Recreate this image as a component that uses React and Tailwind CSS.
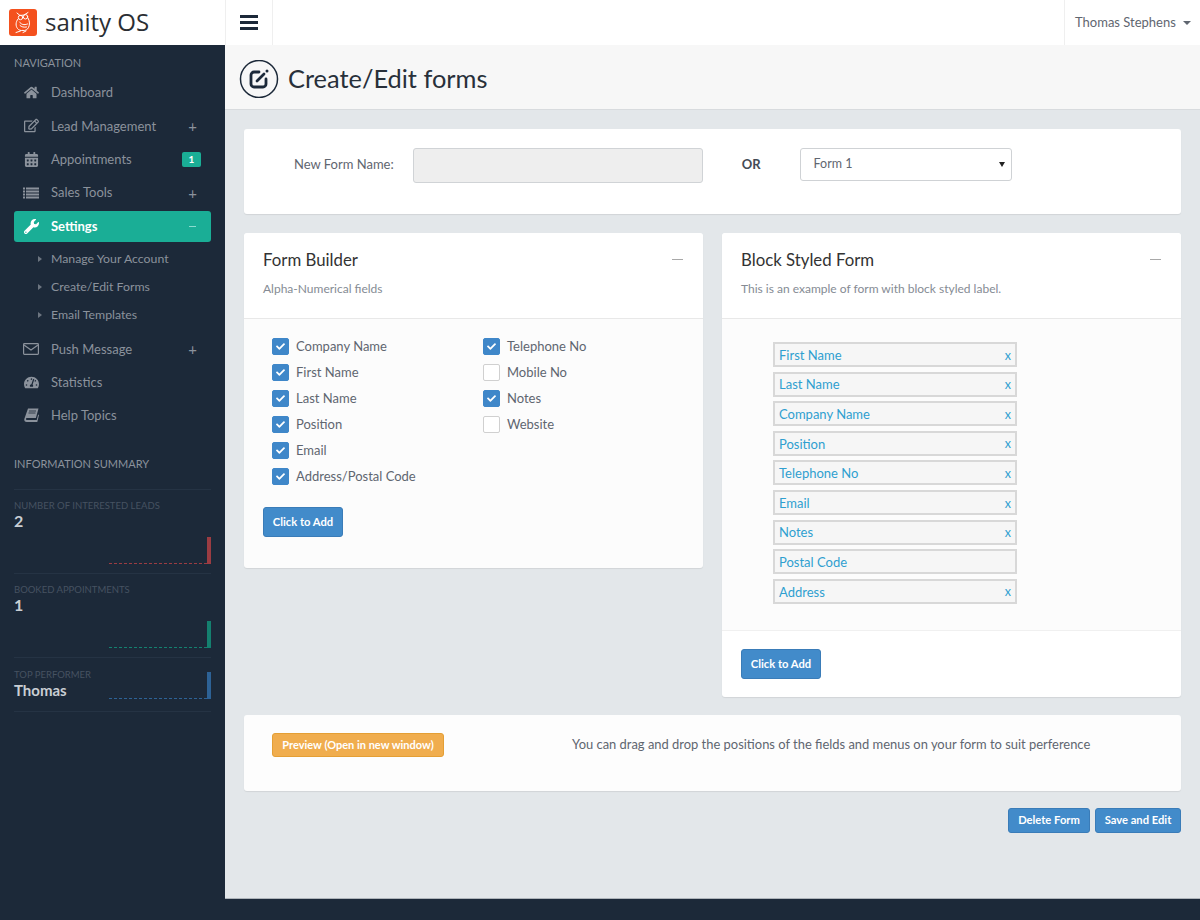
import { FaHome, FaRegEdit, FaCalendarAlt, FaWrench, FaTachometerAlt, FaCheck } from "react-icons/fa";

function EnvelopeIcon() {
  return (
    <svg width="16" height="12" viewBox="0 0 16 12" fill="none" stroke="currentColor" strokeWidth="1.200">
      <rect x="0.600" y="0.600" width="14.800" height="10.800" rx="0.800" />
      <path d="M1 2l7 5 7-5" />
    </svg>
  );
}

function BookIcon() {
  return (
    <svg width="15" height="14" viewBox="0 0 15 14" fill="currentColor">
      <path d="M4 0.500h10.500l-2.600 9.500H3.300c-.9 0-1.300.4-1.300 1s.4 1 1.300 1h9.400l1.500-5.500.8.600L13.300 14H2.800C1 14 0 12.800 .3 11z" />
      <path d="M5 3h7M4.500 5h7" stroke="#1c2939" strokeWidth="0.800" />
    </svg>
  );
}

function ListIcon() {
  return (
    <svg width="16" height="12" viewBox="0 0 16 12" fill="currentColor">
      <rect x="0" y="0.500" width="2" height="2" />
      <rect x="3" y="0.500" width="13" height="2" />
      <rect x="0" y="3.500" width="2" height="2" />
      <rect x="3" y="3.500" width="13" height="2" />
      <rect x="0" y="6.500" width="2" height="2" />
      <rect x="3" y="6.500" width="13" height="2" />
      <rect x="0" y="9.500" width="2" height="2" />
      <rect x="3" y="9.500" width="13" height="2" />
    </svg>
  );
}

const navTop = [
  { label: "Dashboard", icon: <FaHome size={15} /> },
  { label: "Lead Management", icon: <FaRegEdit size={15} />, plus: true },
  { label: "Appointments", icon: <FaCalendarAlt size={15} />, badge: "1" },
  { label: "Sales Tools", icon: <ListIcon />, plus: true },
];
const navBottom = [
  { label: "Push Message", icon: <EnvelopeIcon />, plus: true },
  { label: "Statistics", icon: <FaTachometerAlt size={15} /> },
  { label: "Help Topics", icon: <BookIcon /> },
];
const subItems = ["Manage Your Account", "Create/Edit Forms", "Email Templates"];
const col1 = ["Company Name", "First Name", "Last Name", "Position", "Email", "Address/Postal Code"];
const col2 = [
  { label: "Telephone No", on: true },
  { label: "Mobile No", on: false },
  { label: "Notes", on: true },
  { label: "Website", on: false },
];
const blocks = [
  { label: "First Name", x: true },
  { label: "Last Name", x: true },
  { label: "Company Name", x: true },
  { label: "Position", x: true },
  { label: "Telephone No", x: true },
  { label: "Email", x: true },
  { label: "Notes", x: true },
  { label: "Postal Code", x: false },
  { label: "Address", x: true },
];

function Owl() {
  return (
    <svg width="28" height="27" viewBox="0 0 28 27" className="shrink-0">
      <rect width="28" height="27" rx="3" fill="#f4511e" />
      <g fill="none" stroke="#fff" strokeWidth="1" strokeLinecap="round" strokeLinejoin="round">
        <path d="M8 4l3 2.500 4-.5 4-2.500" />
        <circle cx="11.500" cy="8.500" r="2.200" />
        <circle cx="16.500" cy="7.800" r="2.200" />
        <path d="M9 10c-2.500 3-2.500 7-.5 9.500 1.200 1.500 3 2.300 5 2" />
        <path d="M19 9c2 3 1.800 7 .5 9.500-1 2-3 3.500-6 3" />
        <path d="M10.500 13c1.500 2.500 4.500 3.500 8 2M11 16.500c1.500 1.500 4 2 6.500 1.500" />
        <path d="M7 23.500l4.500-1.500M14 23.500l3-1.500" />
      </g>
    </svg>
  );
}

function NavItem({ item }) {
  return (
    <div className="flex h-[33.300px] items-center pl-[9px] pr-[14px] text-[#8b929c]">
      <span className="flex w-[16px] items-center justify-center">{item.icon}</span>
      <span className="ml-[12px] pt-[1px] text-[13px]">{item.label}</span>
      {item.plus && <span className="ml-auto mt-[2px] text-[15px] leading-none">+</span>}
      {item.badge && (
        <span className="ml-auto -mr-[4px] flex h-[15px] w-[19px] items-center justify-center rounded-[2px] bg-[#1aae96] text-[10px] font-bold text-white">
          {item.badge}
        </span>
      )}
    </div>
  );
}

function Stat({ label, value, color, valueClass, small }) {
  return (
    <div className={`relative border-b border-[#253344] ${small ? "h-[54px] pt-[11px]" : "h-[84px] pt-[10px]"}`}>
      <div className="text-[9.500px] leading-[12px] text-[#465261]">{label}</div>
      <div className={`-mt-[1px] leading-[20px] text-[#c9ced4] ${valueClass}`}>{value}</div>
      <div className={`absolute right-0 flex h-[27px] items-end ${small ? "bottom-[12px]" : "bottom-[9px]"}`}>
        <div className="w-[98px] border-b border-dashed" style={{ borderColor: color }} />
        <div className="h-[27px] w-[4px]" style={{ backgroundColor: color }} />
      </div>
    </div>
  );
}

function Check({ on }) {
  return (
    <span className={`flex h-[17px] w-[17px] items-center justify-center rounded-[2px] border ${on ? "border-[#3f87c9] bg-[#3f87c9]" : "border-[#d0d0d0] bg-white"}`}>
      {on && <FaCheck size={9} className="text-white" />}
    </span>
  );
}

function CheckRow({ label, on }) {
  return (
    <div className="flex h-[26px] items-center gap-[7px] text-[13px] text-[#5f6670]">
      <Check on={on} />
      <span className="pt-[1px]">{label}</span>
    </div>
  );
}

function BlueButton({ children, className = "" }) {
  return (
    <button className={`rounded-[3px] border border-[#3a7cb8] bg-[#428bca] text-[11.200px] font-bold text-white ${className}`}>
      {children}
    </button>
  );
}

function CardHead({ title, sub }) {
  return (
    <div className="relative h-[86px] rounded-t-[3px] border-b border-[#e8e8e8] bg-white px-[19px] pt-[17px]">
      <h2 className="text-[16.800px] leading-[20px] text-[#333]">{title}</h2>
      <p className="mt-[12px] text-[12px] leading-[14px] text-[#858b94]">{sub}</p>
      <div className="absolute right-[20px] top-[26px] h-[1px] w-[11px] bg-[#a8a8a8]" />
    </div>
  );
}

export default function App() {
  return (
    <div className="flex h-[920px] w-[1200px] flex-col overflow-hidden bg-[#1c2939] font-['Lato',sans-serif]">
      <header className="flex h-[45px] shrink-0 bg-white">
        <div className="flex w-[225px] items-center gap-[8px] pl-[9px] pb-[1px]">
          <Owl />
          <span className="pb-[1px] font-['Open_Sans',sans-serif] text-[24px] leading-none text-[#2a2e33]">sanity OS</span>
        </div>
        <div className="flex w-[48px] items-center justify-center border-x border-[#efefef]">
          <div className="flex w-[18px] flex-col gap-[3px]">
            <div className="h-[3px] bg-[#1c2939]" />
            <div className="h-[3px] bg-[#1c2939]" />
            <div className="h-[3px] bg-[#1c2939]" />
          </div>
        </div>
        <div className="ml-auto flex w-[136px] items-center border-l border-[#efefef] pl-[10px] text-[13px] text-[#5f6670]">
          Thomas Stephens
          <span className="ml-[7px] mt-[1px] h-0 w-0 border-x-[4px] border-t-[4px] border-x-transparent border-t-[#5f6670]" />
        </div>
      </header>

      <div className="flex min-h-0 flex-1">
        <aside className="w-[225px] shrink-0 bg-[#1c2939] px-[14px]">
          <div className="pt-[12px] text-[11px] leading-[12px] text-[#8b929c]">NAVIGATION</div>
          <div className="mt-[7px]">
            {navTop.map((i) => (
              <NavItem key={i.label} item={i} />
            ))}
          </div>
          <div className="mt-[2px] flex h-[31px] items-center rounded-[3px] bg-[#1aae96] pl-[9px] pr-[14px] text-white">
            <span className="flex w-[16px] justify-center"><FaWrench size={15} /></span>
            <span className="ml-[12px] text-[13px] font-bold">Settings</span>
            <span className="ml-auto mr-[1px] h-[1px] w-[7px] bg-[#8adccf]" />
          </div>
          <div className="mt-[3px] pb-[3px]">
            {subItems.map((s) => (
              <div key={s} className="flex h-[28px] items-center pl-[24px] text-[12.300px] text-[#8b929c]">
                <span className="mr-[9px] h-0 w-0 border-y-[3.500px] border-l-[4px] border-y-transparent border-l-[#6c7580]" />
                <span className="pt-[1px]">{s}</span>
              </div>
            ))}
          </div>
          {navBottom.map((i) => (
            <NavItem key={i.label} item={i} />
          ))}
          <div className="mt-[25px] text-[11px] leading-[14px] text-[#8b929c]">INFORMATION SUMMARY</div>
          <div className="mt-[18px] border-t border-[#253344]">
            <Stat label="NUMBER OF INTERESTED LEADS" value="2" color="#9b3c42" valueClass="text-[16px] font-bold" />
            <Stat label="BOOKED APPOINTMENTS" value="1" color="#14806f" valueClass="text-[16px] font-bold" />
            <Stat label="TOP PERFORMER" value="Thomas" color="#2d6296" valueClass="text-[15px] font-bold" small />
          </div>
        </aside>

        <main className="flex min-w-0 flex-1 flex-col">
          <div className="flex h-[65px] shrink-0 items-center gap-[9px] border-b border-[#d8dbde] bg-[#f7f7f7] pl-[14px] pt-[4px]">
            <svg width="40" height="38" viewBox="0 0 40 38" fill="none" stroke="#1c2939">
              <circle cx="20" cy="19" r="18.500" strokeWidth="1.500" />
              <path d="M20 12h-5a3 3 0 0 0-3 3v9a3 3 0 0 0 3 3h9a3 3 0 0 0 3-3v-5" strokeWidth="2.800" strokeLinecap="round" />
              <path d="M18 21l7-7" strokeWidth="2.800" strokeLinecap="round" />
              <circle cx="28" cy="11" r="1.500" fill="#1c2939" stroke="none" />
            </svg>
            <h1 className="text-[25.400px] leading-none text-[#28303a]">Create/Edit forms</h1>
          </div>

          <div className="flex-1 bg-[#e3e7ea] pl-[19px] pr-[19px] pt-[19px]">
            <section className="flex h-[85px] items-start rounded-[3px] bg-white pt-[19px] shadow-[0_1px_1px_rgba(0,0,0,0.08)]">
              <label className="ml-[50px] mt-[7px] text-[13px] leading-[18px] text-[#5f6670]">New Form Name:</label>
              <input disabled className="ml-[19px] h-[35px] w-[290px] rounded-[3px] border border-[#d0d3d6] bg-[#eeeeee]" />
              <span className="ml-[39px] mt-[7px] text-[13px] font-bold leading-[18px] text-[#444b55]">OR</span>
              <div className="relative ml-[39px] flex h-[33px] w-[212px] items-center rounded-[3px] border border-[#cfd2d5] bg-white pl-[13px] text-[12.500px] text-[#5f6670]">
                Form 1
                <span className="absolute right-[6px] top-[13px] h-0 w-0 border-x-[3.500px] border-t-[5px] border-x-transparent border-t-[#222]" />
              </div>
            </section>

            <div className="mt-[19px] flex items-start gap-[19px]">
              <section className="w-[459px] overflow-hidden rounded-[3px] bg-[#fcfcfc] shadow-[0_1px_1px_rgba(0,0,0,0.08)]">
                <CardHead title="Form Builder" sub="Alpha-Numerical fields" />
                <div className="flex px-[28px] pt-[14px]">
                  <div className="w-[211px]">
                    {col1.map((l) => (
                      <CheckRow key={l} label={l} on />
                    ))}
                  </div>
                  <div>
                    {col2.map((c) => (
                      <CheckRow key={c.label} label={c.label} on={c.on} />
                    ))}
                  </div>
                </div>
                <div className="px-[19px] pb-[31px] pt-[18px]">
                  <BlueButton className="h-[30px] w-[80px]">Click to Add</BlueButton>
                </div>
              </section>

              <section className="flex-1 overflow-hidden rounded-[3px] bg-white shadow-[0_1px_1px_rgba(0,0,0,0.08)]">
                <CardHead title="Block Styled Form" sub="This is an example of form with block styled label." />
                <div className="flex h-[312px] flex-col gap-[4.600px] border-b border-[#f0f0f0] bg-[#fcfcfc] pl-[51px] pt-[23px]">
                  {blocks.map((b) => (
                    <div key={b.label} className="flex h-[25px] w-[244px] shrink-0 items-center justify-between border-2 border-[#d8d8d8] bg-[#f6f6f6] pl-[4px] pr-[4px] pt-[2px] text-[13px] text-[#2f9fd0]">
                      <span>{b.label}</span>
                      {b.x && <span className="mt-[1px] text-[12.500px]">x</span>}
                    </div>
                  ))}
                </div>
                <div className="px-[19px] pb-[18px] pt-[18px]">
                  <BlueButton className="block h-[30px] w-[80px]">Click to Add</BlueButton>
                </div>
              </section>
            </div>

            <section className="mt-[18px] flex h-[76px] items-start rounded-[3px] bg-[#fdfdfd] pt-[18px] shadow-[0_1px_1px_rgba(0,0,0,0.08)]">
              <button className="ml-[28px] h-[24px] w-[172px] rounded-[3px] border border-[#e49f35] bg-[#f0ad4e] text-[11px] font-bold text-white">
                Preview (Open in new window)
              </button>
              <p className="ml-[128px] mt-[3px] text-[12.930px] leading-[16px] text-[#5f6670]">
                You can drag and drop the positions of the fields and menus on your form to suit perference
              </p>
            </section>

            <div className="mt-[17px] flex justify-end gap-[5px]">
              <BlueButton className="h-[25px] w-[82px]">Delete Form</BlueButton>
              <BlueButton className="h-[25px] w-[86px]">Save and Edit</BlueButton>
            </div>
          </div>
          <div className="h-[22px] shrink-0 border-t border-[#aeb4ba] bg-[#1c2939]" />
        </main>
      </div>
    </div>
  );
}
